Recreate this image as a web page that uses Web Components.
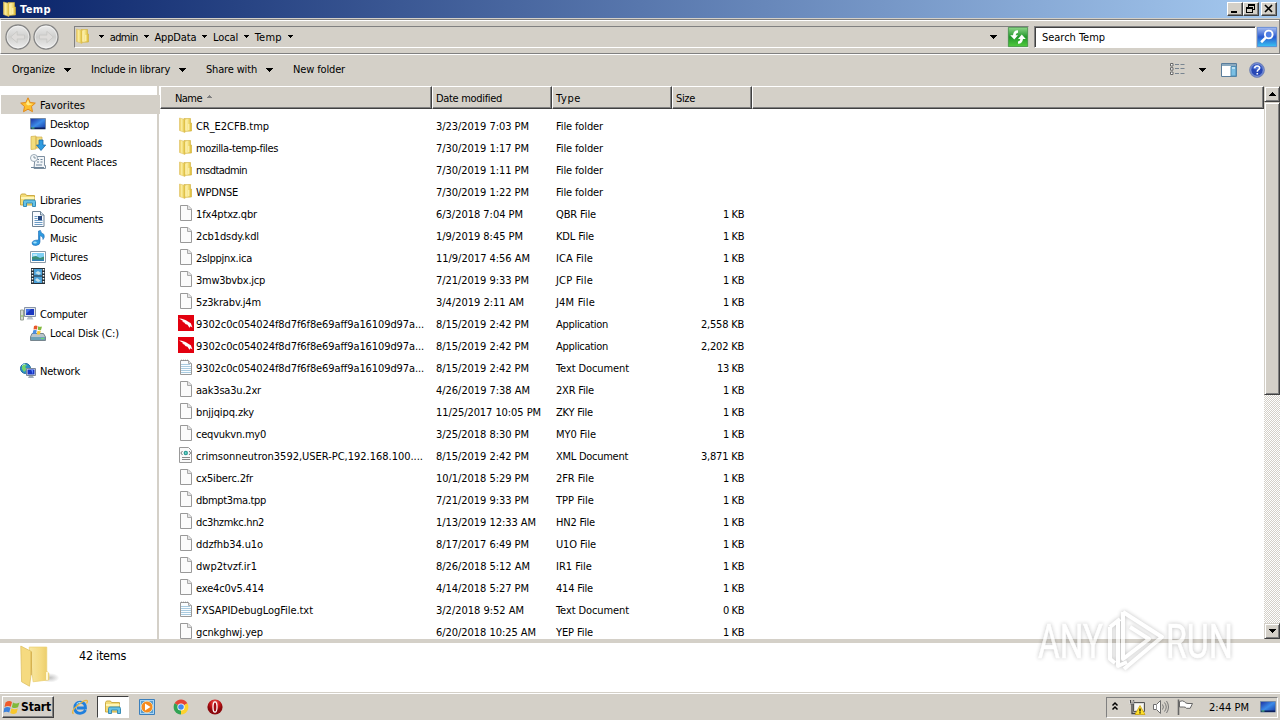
<!DOCTYPE html>
<html lang="en">
<head>
<meta charset="UTF-8">
<title>Temp</title>
<style>
    body {
        margin: 0;
        width: 1280px;
        height: 720px;
        overflow: hidden;
        background: #d4d0c8;
        color: #000;
        font: 11px/14px "DejaVu Sans Condensed", "DejaVu Sans", sans-serif;
    }
</style>
</head>
<body>
<explorer-window></explorer-window>

<script>
/* pixel advances of the interface font at 11px */
const ADVANCE = {
    a:6, b:6, c:5, d:6, e:6, f:4, g:6, h:6, i:2, j:3, k:5, l:2, m:8, n:6, o:6, p:6, q:6, r:4, s:5, t:4, u:6, v:6, w:8, x:5, y:6, z:5,
    A:7, B:6, C:7, D:7, E:6, F:6, G:7, H:7, I:4, J:5, K:6, L:6, M:9, N:7, O:8, P:6, Q:8, R:7, S:6, T:7, U:7, V:6, W:10, X:6, Y:6, Z:6,
    ' ':3, '/':4, ':':4, '.':4, ',':4, '-':4, '_':6, '(':4, ')':4
};

const ICONS = {
    folder: `
        <defs><linearGradient id="f" x1="0" x2="1"><stop offset="0" stop-color="#e9c452"/><stop offset=".4" stop-color="#fbeea0"/><stop offset="1" stop-color="#dcb92e"/></linearGradient></defs>
        <path d="M6 1.500h6.500v4.500h1V14L6 14.500z" fill="url(#f)" stroke="#d0b03c" stroke-width=".6"/>
        <path d="M1.500 1L7 2.500V15.500L1.500 13.500z" fill="url(#f)" stroke="#dfc363" stroke-width=".6"/>
        <path d="M7.900 3v10.500M10.800 7v6" stroke="#fff6bb" stroke-width="1"/>`,
    file: `
        <path d="M2.500 .5h7.500l3.500 3.500v11.500h-11z" fill="#fbfbfb" stroke="#999"/>
        <path d="M9.500 .5v4h4" fill="#e4e4e4" stroke="#aaa"/>`,
    text: `
        <path d="M2.500 1.500h8l3 3v11h-11z" fill="#fafdff" stroke="#999"/>
        <path d="M3 1.200h8" stroke="#888" stroke-dasharray="1 1"/>
        <path d="M3 5.500h9M3 7.500h10M3 9.500h10M3 11.500h10M3 13.500h10" stroke="#a9cbe0"/>
        <path d="M10.500 1.500v3h3" fill="#e4e4e4" stroke="#aaa"/>`,
    xml: `
        <path d="M1.500 .5h9l3 3v12h-12z" fill="#fafafa" stroke="#999"/>
        <path d="M4.500 4L2.800 6l1.700 2M11 4l1.700 2L11 8" fill="none" stroke="#777"/>
        <circle cx="7.800" cy="6" r="2.200" fill="#2e9d96"/><circle cx="7.800" cy="6" r=".8" fill="#9fe"/>
        <path d="M4 10.500h8M4 12.500h8" stroke="#8a8a8a"/>`,
    app: `
        <path d="M0 0h16v16H0z" fill="#e3000f"/>
        <path d="M1 3.500C5 3.500 7.500 5 9.500 6.300L12.800 8.200L14.500 12.500L12.500 11.200L11.500 12.800L9.500 9.800L6.500 8.700L7.500 8.200L4 6.500L5.500 6.300z" fill="#fff"/>`,
    star: `
        <path d="M8 .8l2.200 4.700 5.100.6-3.800 3.400 1 5.200L8 12.200l-4.500 2.500 1-5.200L.7 6.100l5.100-.6z" fill="#fdbf2d" stroke="#e18a1c"/>
        <path d="M8 2.800L9.500 6.600l3.600.3L8 8.500 6 7z" fill="#ffec8c"/>`,
    desktop: `
        <defs><linearGradient id="d" x2="1" y2="1"><stop stop-color="#1d2e9e"/><stop offset=".5" stop-color="#3c8be8"/><stop offset="1" stop-color="#1535a0"/></linearGradient></defs>
        <path d="M.5 2.500h15v10.500H.5z" fill="url(#d)" stroke="#778aa5"/>
        <path d="M1 11.500h14v1.500H1z" fill="#0d1f5b"/><path d="M1.500 12h3" stroke="#5bd07c"/>`,
    downloads: `
        <path d="M1 1.500l5-.5v13L1 14.500zM6 2h6v11H6z" fill="#f3dd7d" stroke="#d2b04d" stroke-width=".7"/>
        <path d="M9 5h4v5h2.700L11 15.500 6.500 10H9z" fill="#2f9be0" stroke="#1969a8" stroke-width=".8"/>`,
    recent: `
        <path d="M5 2.500h9.500v9H15.500v3H4z" fill="#f2f5f8" stroke="#7d8fa0"/>
        <path d="M7 5.500h2M10.500 5.500h2M7 8h2M10.500 8h2M6 11h6M1 13.500h13" stroke="#6d8499"/>
        <circle cx="4" cy="4" r="3.500" fill="#f7fafc" stroke="#9ba9b5"/><path d="M4 2v2h2" fill="none" stroke="#6b7d8d" stroke-width=".8"/>`,
    library: `
        <path d="M.5 13V3.500l1-1.500h4l1 1.500h8V13z" fill="#f4dc77" stroke="#ccab45"/>
        <path d="M1 6h13.500" stroke="#fff5b5" stroke-width="2"/>
        <path d="M3.500 14.500V9.500q0-1.500 1.500-1.500h9q1.500 0 1.500 1.500v5h-3v-3.500h-6v3.500z" fill="#65c2e6" stroke="#398cb4"/>`,
    documents: `
        <path d="M2.500 .5h8l3.500 3.500v11.500H2.500z" fill="#fafcff" stroke="#6f8294"/>
        <path d="M10.500 .5V4H14" fill="#d5e5f2" stroke="#6f8294"/>
        <path d="M4.500 5.500h3M4.500 7.500h3M4.500 9.500h8M4.500 11.500h8M4.500 13.500h8" stroke="#6d9bc4"/><path d="M8 5h4v4H8z" fill="#25467e"/>`,
    music: `
        <path d="M8.500 1L10.500 .5Q10.500 3 14 4.500q1 3-1 5 .5-3-3-4V12q0 3-4 3.500-4 .2-4-2.500 .5-3 6.500-3z" fill="#2d9be0" stroke="#1767b4" stroke-width=".6"/>
        <ellipse cx="5" cy="12.500" rx="1.800" ry="1" fill="#a2e1fb"/>`,
    pictures: `
        <path d="M.5 2.500h15v11H.5z" fill="#fff" stroke="#8a9aa8"/><path d="M2 4h12v8H2z" fill="#7fd0f4"/>
        <path d="M2 8l4-1 4 2 4-1.500V12H2z" fill="#3a8f77"/><path d="M2 10.500h12V12H2z" fill="#2f7fb8"/><path d="M3 6h4" stroke="#fff"/>`,
    videos: `
        <path d="M1 0h14v16H1z" fill="#253038"/><path d="M4 1h8v6.500H4zM4 8.500h8V15H4z" fill="#4aa0d8"/>
        <path d="M2.500 1v15M13.500 1v15" stroke="#fff" stroke-width="1.500" stroke-dasharray="1.500 1.500"/>
        <path d="M5 5l3-2 3 2-2 2zM5 12l2-2 4 3-3 1z" fill="#c4e1ea"/>`,
    computer: `
        <path d="M.5 4h3v10h-3z" fill="#d3d8d0" stroke="#959f92"/><path d="M1 10h2" stroke="#7ec24a"/>
        <path d="M4.500 1.500h11v9h-11z" fill="#dfe5ec" stroke="#8793a6"/><path d="M6 3h8v6H6z" fill="#1a37c0"/><path d="M6 3h5L6 8z" fill="#3f6ee8"/>
        <path d="M8 11h4l1.500 2.500h-7z" fill="#b6c0cb"/>`,
    disk: `
        <path d="M2 8.500h11.500l2 3.500v3.500H.5V12z" fill="#b9c4cb" stroke="#76858e"/><path d="M1 12h14v3H1z" fill="#6da1b6"/><path d="M11 13.500h3" stroke="#67e06d"/>
        <path d="M4 1q2-1 3.500 0L7 4.500Q5 4 3.500 4.500z" fill="#e8572a"/><path d="M8.200 1.300q2 1 3.800.2L11 5Q9.500 5.500 7.800 4.800z" fill="#84ba3e"/>
        <path d="M3.300 5.300Q5 4.600 6.800 5.300L6 9Q4.500 8.300 2.500 9z" fill="#4a8ee0"/><path d="M7.500 5.700q1.700.8 3.300.1L10 9.200Q8.500 10 6.800 9.200z" fill="#f6c431"/>`,
    network: `
        <circle cx="5.500" cy="5.500" r="5" fill="#2c8fc7" stroke="#1f6a9b"/><path d="M2 3q3-3 5-1l-2 2 2 2-3 3-2-3z" fill="#74d36b"/><path d="M2 2.500q1.500-1.500 3-1.500" stroke="#c7f1ff" fill="none"/>
        <path d="M6.500 5.500h9v7h-9z" fill="#dfe5ec" stroke="#7b8799"/><path d="M7.500 6.500h7v5h-7z" fill="#1836c4"/><path d="M11 6.500h2v5" fill="#5b86ff"/><path d="M9 13h4l1 2H8z" fill="#9fabb8"/>`,
    back: `
        <defs><linearGradient id="b" x2="0" y2="1"><stop stop-color="#ececec"/><stop offset=".5" stop-color="#cfcfcd"/><stop offset="1" stop-color="#efefef"/></linearGradient></defs>
        <circle cx="8" cy="8" r="7.400" fill="url(#b)" stroke="#858585" stroke-width=".8"/><circle cx="8" cy="8" r="6.700" fill="none" stroke="#fff" stroke-opacity=".6" stroke-width=".5"/>
        <path d="M3.500 8L7.500 4.500v2.300h4.500v2.400H7.500v2.300z" fill="#dedcda" stroke="#c6c6c4" stroke-width=".5"/>`,
    refresh: `
        <defs><linearGradient id="r" x2="0" y2="1"><stop stop-color="#8fd68a"/><stop offset=".5" stop-color="#22972b"/><stop offset="1" stop-color="#50cb3d"/></linearGradient></defs>
        <path d="M.3 .3h15.400v15.400H.3z" fill="url(#r)" stroke="#3c8a42" stroke-width=".6"/>
        <path d="M8 2.700Q4.500 2.500 4 6.500H1.800L5 10l3-3.500H6.100Q6.300 4.800 8 4.500zM8 13.300Q11.500 13.500 12 9.500h2.200L11 6 8 9.500h1.900Q9.700 11.200 8 11.500z" fill="#fff"/>`,
    search: `
        <defs><linearGradient id="s" x2="0" y2="1"><stop stop-color="#a7bdf0"/><stop offset=".5" stop-color="#2859cf"/><stop offset="1" stop-color="#39c3f3"/></linearGradient></defs>
        <path d="M.3 .3h15.400v15.400H.3z" fill="url(#s)" stroke="#4c7bd0" stroke-width=".6"/>
        <circle cx="9.400" cy="6" r="3.100" fill="#507fe5" stroke="#fff" stroke-width="1.500"/><path d="M7 8.500L3.300 12.200" stroke="#fff" stroke-width="2"/>`,
    views: `
        <path d="M.5 1.500h2.500v2.500H.5zM.5 5.700h2.500v2.500H.5zM.5 10h2.500v2.500H.5z" fill="#fff" stroke="#666"/>
        <path d="M5 2.500h4M5 6.500h4M5 11.500h4M10.500 2.500h4M10.500 6.500h4M10.500 11.500h4" stroke="#788591"/>`,
    preview: `
        <path d="M.5 1.500h15v13H.5z" fill="#fff" stroke="#597c9b"/><path d="M1 2h14v2H1z" fill="#8aa9bf"/><path d="M10 4.500h5v9.500h-5z" fill="#7bbfe3" stroke="#4f8db4"/><path d="M11 6h3" stroke="#fff"/>`,
    help: `
        <circle cx="8" cy="8" r="7.400" fill="#2747b5" stroke="#7d8db8"/><circle cx="8" cy="8" r="6.300" fill="none" stroke="#a9bbea" stroke-width=".8"/><path d="M3 6q5-6 10 0-5 3-10 0" fill="#6e94e8" opacity=".6"/>
        <path d="M5.700 6.200Q5.800 4 8.200 4t2.300 2q0 1.200-1.300 1.900Q8.300 8.400 8.300 9.700M8.300 11v1.600" fill="none" stroke="#fff" stroke-width="1.600"/>`,
    flag: `
        <path d="M1.500 3.500Q5 1 8 3L6.800 7.700Q4 6 .5 8z" fill="#ef5a2a"/><path d="M9 3.500q3 1.800 6.500 0L14 8.300q-3 1.600-6.200-.1z" fill="#80b93c"/>
        <path d="M.3 9q3-2 6.200-.2L5.200 13.500Q2.500 12 -.5 13.500z" fill="#3c82dc"/><path d="M7.500 9.300q3 1.800 6.300.1L12.500 14q-3 1.800-6.300 0z" fill="#f8c72d"/>`,
    ie: `
        <path d="M13.500 11Q12 14.300 8 14.300 2.800 14 2.800 8.700 3 3.500 8.200 3.200 13.500 3.500 13.500 9H5" fill="none" stroke="#1f7fdd" stroke-width="2.800"/>
        <path d="M1.500 14.800Q-1.500 12.500 5.500 6.500 12.500 .5 15 1.500q1 .6-.5 3" fill="none" stroke="#e9b53d" stroke-width="1.300"/><path d="M4.500 5q2-2 4-1.500" fill="none" stroke="#aee7ff"/>`,
    wmp: `
        <path d="M.5 .5h15v15H.5z" fill="#a6d4f5" stroke="#3b7fbc"/><path d="M2 2h12v12H2z" fill="#5b9ed0"/>
        <circle cx="8" cy="8" r="5.800" fill="#f58b1e" stroke="#fff0cb" stroke-width=".7"/><path d="M6 4.500L11.500 8 6 11.500z" fill="#fff"/>`,
    chrome: `
        <path d="M8 8L1.600 4.300A7.400 7.400 0 0 1 14.400 4.300z" fill="#e44436"/><path d="M8 8l6.400-3.700A7.400 7.400 0 0 1 8 15.400z" fill="#fdd22e"/><path d="M8 8v7.400A7.400 7.400 0 0 1 1.600 4.300z" fill="#32a354"/>
        <circle cx="8" cy="8" r="3.600" fill="#fff"/><circle cx="8" cy="8" r="2.800" fill="#4389ef"/>`,
    opera: `
        <defs><radialGradient id="o" cy=".25"><stop stop-color="#f3776c"/><stop offset=".6" stop-color="#c9171a"/><stop offset="1" stop-color="#8c080c"/></radialGradient></defs>
        <circle cx="8" cy="8" r="7.600" fill="url(#o)"/><ellipse cx="8" cy="8" rx="2" ry="5.200" fill="#a40b12" stroke="#fff" stroke-width="1.300"/>`,
    chevrons: `<path d="M5.500 6.500L8 4l2.500 2.500M5.500 10.500L8 8l2.500 2.500" fill="none" stroke="#000" stroke-width="1.500"/>`,
    wired: `
        <path d="M4.500 3.500h11v9h-11z" fill="#dcdcd8" stroke="#555"/><path d="M6 5h8v6H6z" fill="#f7f7f3"/><path d="M1.500 1v3.500h3V1M3 5v9.500h7" fill="none" stroke="#444" stroke-width="1.300"/><path d="M.5 1.500v3h4v-3" fill="none" stroke="#fff" stroke-width=".5"/>
        <path d="M11 6.500l5 9H6z" fill="#ffe12b" stroke="#c69a00" stroke-width=".7"/><path d="M11 9.500v3M11 13.300v1.200" stroke="#000" stroke-width="1.200"/>`,
    speaker: `
        <path d="M.5 5.500h3l4-4v13l-4-4h-3z" fill="#fff" stroke="#6c6c6c"/><path d="M3.500 5.500v5" stroke="#999"/>
        <path d="M9.500 5.500q1.800 2.500 0 5M11.500 3.500q3.500 4.500 0 9M13.500 2q4 6 0 12" fill="none" stroke="#777"/>`,
    pennant: `
        <path d="M1.500 .5v15.500" stroke="#666" stroke-width="1.600"/><path d="M2.500 2.500q3-1.500 5 .2 1 1.700 3.500 1.800h4.500l-2.300 4.800H9.500q-1-1.500-3-1.300h-4z" fill="#fff" stroke="#666"/>`,
    bigfolder: `
        <defs>
            <linearGradient id="g" x1="0" x2="1"><stop stop-color="#f8e7a4"/><stop offset=".6" stop-color="#f4da80"/><stop offset="1" stop-color="#e9ca65"/></linearGradient>
            <radialGradient id="h"><stop stop-color="#999" stop-opacity=".6"/><stop offset="1" stop-color="#999" stop-opacity="0"/></radialGradient>
        </defs>
        <ellipse cx="11.500" cy="12.500" rx="3.500" ry="1.800" fill="url(#h)"/>
        <path d="M3.500 .8H10.200V10l.8 .8v2.500L5 14z" fill="url(#g)" stroke="#ecd174" stroke-width=".3"/>
        <path d="M.3 .4L4.200 2.400V11.500L3.600 15.700L.6 14z" fill="#f5da80" stroke="#dec063" stroke-width=".3"/>
        <path d="M4.300 2.500v9" stroke="#c99e35" stroke-width=".3"/><path d="M10.300 10.300v3" stroke="#fff8d7" stroke-width=".8"/>`
};

class WinIcon extends HTMLElement {
    constructor(){
        super();
        this.attachShadow({mode:'open'});
    }

    connectedCallback(){
        const size = this.getAttribute('size') || 16;
        this.shadowRoot.innerHTML = /* html */ `
            <style>
                :host { display: block; flex: none; width: ${size}px; height: ${size}px; }
                svg { display: block; width: 100%; height: 100%; overflow: visible; }
            </style>
            <svg viewBox="0 0 16 16" aria-hidden="true">${ICONS[this.getAttribute('name')]}</svg>
        `
    }
}
customElements.define('win-icon', WinIcon);


/* small solid triangle: dir = up | down, w = odd width */
class WinArrow extends HTMLElement {
    constructor(){
        super();
        this.attachShadow({mode:'open'});
    }

    connectedCallback(){
        const w = Number(this.getAttribute('w') || 7);
        const h = (w + 1) / 2;
        const up = this.getAttribute('dir') === 'up';
        let rows = '';
        for(let i = 0; i < h; i++){
            rows += `<rect x="${i}" y="${up ? h - 1 - i : i}" width="${w - i * 2}" height="1"/>`;
        }
        this.shadowRoot.innerHTML = /* html */ `
            <style>
                :host { display: block; flex: none; width: ${w}px; height: ${h}px; }
                svg { display: block; fill: currentColor; }
            </style>
            <svg width="${w}" height="${h}" shape-rendering="crispEdges">${rows}</svg>
        `
    }
}
customElements.define('win-arrow', WinArrow);


/* one line of text, spaced out to the advances above (or to w) */
class WinLabel extends HTMLElement {
    constructor(){
        super();
        this.attachShadow({mode:'open'});
        this.shadowRoot.innerHTML = /* html */ `
            <style>
                :host { display: flex; flex: none; padding-top: var(--drop, 2px); }
                span { flex: none; white-space: pre; }
            </style>
            <span><slot></slot></span>
        `
    }

    connectedCallback(){
        const text = this.textContent;
        const width = Number(this.getAttribute('w')) || [...text].reduce((sum, ch) => sum + (ADVANCE[ch] || 6), 0);
        const natural = this.shadowRoot.querySelector('span').getBoundingClientRect().width;
        this.style.width = width + 'px';
        this.style.letterSpacing = (width - natural) / text.length + 'px';
    }
}
customElements.define('win-label', WinLabel);


class TitleBar extends HTMLElement {
    constructor(){
        super();
        this.attachShadow({mode:'open'});
        this.shadowRoot.innerHTML = /* html */ `
            <style>
                :host { display: flex; align-items: center; box-sizing: border-box; height: 18px; padding: 0 3px 0 2px; background: linear-gradient(90deg, #0a246a, #a6caf0); color: #fff; }
                win-label { margin-left: 2px; font: bold 11px/14px "DejaVu Sans Condensed", sans-serif; }
                .buttons { display: flex; margin-left: auto; }
                button { width: 16px; height: 14px; padding: 0; border: 1px solid; border-color: #fff #404040 #404040 #fff; box-shadow: inset -1px -1px #808080; background: #d4d0c8; }
                button:last-child { margin-left: 2px; }
                svg { display: block; }
            </style>
            <win-icon name="folder"></win-icon>
            <win-label w="31">Temp</win-label>
            <div class="buttons">
                <button aria-label="Minimize"><svg width="14" height="12"><path d="M3 8h6v2H3z"/></svg></button>
                <button aria-label="Restore"><svg width="14" height="12" fill="none" stroke="#000" shape-rendering="crispEdges"><path d="M5 1.500h6M4.500 4V1M5 2.500h6M10.500 2v5M9 6.500h2M2 5h6M2.500 4v6M2 9.500h6M8.500 4v6M2 4.500h6"/></svg></button>
                <button aria-label="Close"><svg width="14" height="12"><path d="M3 2l7 7M10 2l-7 7" stroke="#000" stroke-width="1.600"/></svg></button>
            </div>
        `
    }
}
customElements.define('title-bar', TitleBar);


class AddressBar extends HTMLElement {
    constructor(){
        super();
        this.attachShadow({mode:'open'});
        const path = ['admin', 'AppData', 'Local', 'Temp'];
        this.shadowRoot.innerHTML = /* html */ `
            <style>
                :host { display: flex; align-items: center; box-sizing: border-box; height: 35px; margin: 1px 0; padding: 0 2px 0 4px; border: 1px solid; border-color: #808080 #808080 #808080 #fff; box-shadow: inset 0 1px #fff, 0 1px #fff; }
                .round { display: flex; gap: 2px; padding-right: 14px; }
                .round win-icon:last-child { transform: scaleX(-1); }
                .path { flex: 1; display: flex; align-items: center; box-sizing: border-box; height: 22px; margin-left: 1px; border: 1px solid; border-color: #808080 #d4d0c8 #fff #808080; }
                .path win-label { margin: 0 6px 0 5.700px; }
                .path win-icon:first-child { margin: 0 8px 2px 0; }
                .drop { margin-left: auto; margin-right: 11px; }
                .search { --drop: 1px; box-sizing: border-box; width: 222px; height: 22px; margin-left: 5px; padding: 3px 7px; border: 1px solid; border-color: #808080 #fff #fff #808080; box-shadow: inset 1px 1px #404040; background: #fff; }
                .search + win-icon { margin-left: 1px; }
            </style>
            <div class="round"><win-icon name="back" size="26"></win-icon><win-icon name="back" size="26"></win-icon></div>
            <div class="path">
                <win-icon name="folder"></win-icon>
                <win-arrow w="5"></win-arrow>
                ${path.map((name) => `<win-label>${name}</win-label><win-arrow w="5"></win-arrow>`).join('')}
                <win-arrow class="drop"></win-arrow>
                <win-icon name="refresh" size="20"></win-icon>
            </div>
            <div class="search"><win-label>Search Temp</win-label></div>
            <win-icon name="search" size="20"></win-icon>
        `
    }
}
customElements.define('address-bar', AddressBar);


class CommandBar extends HTMLElement {
    constructor(){
        super();
        this.attachShadow({mode:'open'});
        this.shadowRoot.innerHTML = /* html */ `
            <style>
                :host { --drop: 0; display: flex; align-items: center; box-sizing: border-box; height: 31px; padding: 0 15px 1px 12px; }
                win-arrow { margin: 0 20px 0 9px; }
                .tools { display: flex; align-items: center; margin-left: auto; }
                .tools win-arrow { margin: 0 15px 0 13px; }
                .tools win-icon:last-child { margin-left: 12px; }
            </style>
            ${['Organize', 'Include in library', 'Share with'].map((name) => `<win-label>${name}</win-label><win-arrow></win-arrow>`).join('')}
            <win-label>New folder</win-label>
            <div class="tools">
                <win-icon name="views"></win-icon>
                <win-arrow></win-arrow>
                <win-icon name="preview"></win-icon>
                <win-icon name="help"></win-icon>
            </div>
        `
    }
}
customElements.define('command-bar', CommandBar);


class NavPane extends HTMLElement {
    constructor(){
        super();
        this.attachShadow({mode:'open'});
        const groups = [
            [['star', 'Favorites'], ['desktop', 'Desktop'], ['downloads', 'Downloads'], ['recent', 'Recent Places']],
            [['library', 'Libraries'], ['documents', 'Documents'], ['music', 'Music'], ['pictures', 'Pictures'], ['videos', 'Videos']],
            [['computer', 'Computer'], ['disk', 'Local Disk (C:)']],
            [['network', 'Network']]
        ];
        this.shadowRoot.innerHTML = /* html */ `
            <style>
                :host { display: block; flex: none; box-sizing: border-box; width: 160px; padding: 9px 0 0 1px; background: linear-gradient(90deg, #fff 157px, #d4d0c8 157px 159px, #fff 159px); }
                .group { margin-bottom: 19px; }
                .item { display: flex; align-items: center; gap: 4px; height: 19px; padding-left: 29px; }
                .item:first-child { padding-left: 19px; }
                .group:first-of-type .item:first-child { background: #d4d0c8; }
            </style>
            ${groups.map((items) => `<div class="group">${items.map(([icon, name]) => `
                <div class="item"><win-icon name="${icon}"></win-icon><win-label>${name}</win-label></div>`).join('')}
            </div>`).join('')}
        `
    }
}
customElements.define('nav-pane', NavPane);


class FileRow extends HTMLElement {
    constructor(){
        super();
        this.attachShadow({mode:'open'});
    }

    connectedCallback(){
        const [icon, name, date, type, size] = this.getAttribute('data').split('|');
        this.shadowRoot.innerHTML = /* html */ `
            <style>
                :host { display: grid; grid-template-columns: 258px 120px 120px 68px; align-items: center; height: 22px; padding-left: 18px; }
                .name { display: flex; align-items: center; gap: 2px; }
                .name win-icon { margin-bottom: 2px; }
                .size { justify-self: end; }
            </style>
            <div class="name"><win-icon name="${icon}"></win-icon><win-label>${name}</win-label></div>
            <win-label>${date}</win-label>
            <win-label>${type}</win-label>
            ${size ? `<win-label class="size">${size} KB</win-label>` : ''}
        `
    }
}
customElements.define('file-row', FileRow);


class FileList extends HTMLElement {
    constructor(){
        super();
        this.attachShadow({mode:'open'});
        const rows = [
            'folder|CR_E2CFB.tmp|3/23/2019 7:03 PM|File folder',
            'folder|mozilla-temp-files|7/30/2019 1:17 PM|File folder',
            'folder|msdtadmin|7/30/2019 1:11 PM|File folder',
            'folder|WPDNSE|7/30/2019 1:22 PM|File folder',
            'file|1fx4ptxz.qbr|6/3/2018 7:04 PM|QBR File|1',
            'file|2cb1dsdy.kdl|1/9/2019 8:45 PM|KDL File|1',
            'file|2slppjnx.ica|11/9/2017 4:56 AM|ICA File|1',
            'file|3mw3bvbx.jcp|7/21/2019 9:33 PM|JCP File|1',
            'file|5z3krabv.j4m|3/4/2019 2:11 AM|J4M File|1',
            'app|9302c0c054024f8d7f6f8e69aff9a16109d97a...|8/15/2019 2:42 PM|Application|2,558',
            'app|9302c0c054024f8d7f6f8e69aff9a16109d97a...|8/15/2019 2:42 PM|Application|2,202',
            'text|9302c0c054024f8d7f6f8e69aff9a16109d97a...|8/15/2019 2:42 PM|Text Document|13',
            'file|aak3sa3u.2xr|4/26/2019 7:38 AM|2XR File|1',
            'file|bnjjqipq.zky|11/25/2017 10:05 PM|ZKY File|1',
            'file|ceqvukvn.my0|3/25/2018 8:30 PM|MY0 File|1',
            'xml|crimsonneutron3592,USER-PC,192.168.100....|8/15/2019 2:42 PM|XML Document|3,871',
            'file|cx5iberc.2fr|10/1/2018 5:29 PM|2FR File|1',
            'file|dbmpt3ma.tpp|7/21/2019 9:33 PM|TPP File|1',
            'file|dc3hzmkc.hn2|1/13/2019 12:33 AM|HN2 File|1',
            'file|ddzfhb34.u1o|8/17/2017 6:49 PM|U1O File|1',
            'file|dwp2tvzf.ir1|8/26/2018 5:12 AM|IR1 File|1',
            'file|exe4c0v5.414|4/14/2018 5:27 PM|414 File|1',
            'text|FXSAPIDebugLogFile.txt|3/2/2018 9:52 AM|Text Document|0',
            'file|gcnkghwj.yep|6/20/2018 10:25 AM|YEP File|1'
        ];
        this.shadowRoot.innerHTML = /* html */ `
            <style>
                :host { display: block; flex: 1; overflow: hidden; background: #fff; }
                .head { display: grid; grid-template-columns: 272px 120px 120px 80px 1fr; height: 23px; margin-bottom: 6px; }
                .head div { display: flex; align-items: center; gap: 5px; padding: 0 0 0 3px; border: 1px solid; border-color: #fff #404040 #404040 #fff; box-shadow: inset -1px -1px #808080; background: #d4d0c8; }
                .head div:first-child { padding-left: 14px; }
                win-arrow { color: #808080; margin-bottom: 3px; }
            </style>
            <div class="head">
                <div><win-label>Name</win-label><win-arrow w="5" dir="up"></win-arrow></div>
                <div><win-label>Date modified</win-label></div>
                <div><win-label>Type</win-label></div>
                <div><win-label>Size</win-label></div>
                <div></div>
            </div>
            ${rows.map((row) => `<file-row data="${row}"></file-row>`).join('')}
        `
    }
}
customElements.define('file-list', FileList);


class ScrollBar extends HTMLElement {
    constructor(){
        super();
        this.attachShadow({mode:'open'});
        this.shadowRoot.innerHTML = /* html */ `
            <style>
                :host { display: flex; flex-direction: column; flex: none; width: 16px; background: repeating-conic-gradient(#d4d0c8 0 25%, #fff 0 50%) 0 0 / 2px 2px; }
                div { display: flex; align-items: center; justify-content: center; box-sizing: border-box; height: 16px; border: 1px solid; border-color: #d4d0c8 #404040 #404040 #d4d0c8; box-shadow: inset 1px 1px #fff, inset -1px -1px #808080; background: #d4d0c8; }
                .thumb { height: 293px; }
                div:last-child { margin-top: auto; }
            </style>
            <div><win-arrow dir="up"></win-arrow></div>
            <div class="thumb"></div>
            <div><win-arrow></win-arrow></div>
        `
    }
}
customElements.define('scroll-bar', ScrollBar);


class DetailsPane extends HTMLElement {
    constructor(){
        super();
        this.attachShadow({mode:'open'});
        this.shadowRoot.innerHTML = /* html */ `
            <style>
                :host { --drop: 0; display: flex; gap: 17px; box-sizing: border-box; height: 53px; padding: 2px 0 0 20px; border-top: 4px solid #d4d0c8; background: #fff; }
                win-label { margin-top: 3px; font-size: 12.500px; line-height: 16px; }
            </style>
            <win-icon name="bigfolder" size="42"></win-icon>
            <win-label w="47">42 items</win-label>
        `
    }
}
customElements.define('details-pane', DetailsPane);


class TaskBar extends HTMLElement {
    constructor(){
        super();
        this.attachShadow({mode:'open'});
        this.shadowRoot.innerHTML = /* html */ `
            <style>
                :host { display: flex; align-items: center; box-sizing: border-box; height: 28px; padding: 1px 2px 0; border-top: 1px solid #d4d0c8; box-shadow: inset 0 1px #fff; background: #d4d0c8; }
                .start { --drop: 0; display: flex; align-items: center; gap: 1px; box-sizing: border-box; width: 52px; height: 22px; padding-left: 1px; border: 1px solid; border-color: #fff #404040 #404040 #fff; box-shadow: inset -1px -1px #808080; }
                .start win-label { font: bold 12px/16px "DejaVu Sans Condensed", sans-serif; }
                .pins { display: flex; align-items: center; margin-left: 18px; gap: 18px; }
                .open { display: flex; align-items: center; justify-content: center; box-sizing: border-box; width: 32px; height: 22px; margin: 0 -8px 0 -9px; border: 1px solid; border-color: #404040 #fff #fff #404040; background: #fff; }
                .tray { display: flex; align-items: center; box-sizing: border-box; width: 172px; height: 21px; margin-left: auto; border: 1px solid; border-color: #808080 #fff #fff #808080; }
                .tray win-icon + win-icon { margin-left: 8px; }
                .tray win-label { margin: 0 11px 0 16px; }
            </style>
            <div class="start"><win-icon name="flag"></win-icon><win-label w="30">Start</win-label></div>
            <div class="pins">
                <win-icon name="ie"></win-icon>
                <div class="open"><win-icon name="library"></win-icon></div>
                <win-icon name="wmp"></win-icon>
                <win-icon name="chrome"></win-icon>
                <win-icon name="opera"></win-icon>
            </div>
            <div class="tray">
                <win-icon name="chevrons"></win-icon>
                <win-icon name="wired" style="margin-left:6px"></win-icon>
                <win-icon name="speaker"></win-icon>
                <win-icon name="pennant"></win-icon>
                <win-label>2:44 PM</win-label>
                <win-icon name="desktop"></win-icon>
            </div>
        `
    }
}
customElements.define('task-bar', TaskBar);


class RunMark extends HTMLElement {
    constructor(){
        super();
        this.attachShadow({mode:'open'});
        this.shadowRoot.innerHTML = /* html */ `
            <style>
                :host { display: block; position: absolute; left: 1030px; top: 604px; }
                svg { display: block; overflow: visible; filter: drop-shadow(0 0 2px rgba(0,0,0,.35)); opacity: .7; }
                text { font: 400 48px Roboto, sans-serif; fill: #fff; stroke: #fff; stroke-width: .6; }
            </style>
            <svg width="210" height="74" viewBox="0 0 210 74">
                <text x="8" y="54" textLength="65" lengthAdjust="spacingAndGlyphs">ANY</text>
                <text x="136" y="54" textLength="67" lengthAdjust="spacingAndGlyphs">RUN</text>
                <g fill="none" stroke="#fff" stroke-width="4" stroke-linejoin="round">
                    <path d="M80 23V55l5 4"/>
                    <path d="M80 23l10-8"/>
                    <path d="M88 16V62l9-4"/>
                    <path d="M93 8L132 33 94 65"/>
                    <path d="M93 8V55L119 35 100 23"/>
                </g>
            </svg>
        `
    }
}
customElements.define('run-mark', RunMark);


class ExplorerWindow extends HTMLElement {
    constructor(){
        super();
        this.attachShadow({mode:'open'});
        this.shadowRoot.innerHTML = /* html */ `
            <style>
                :host { display: flex; flex-direction: column; height: 720px; }
                .main { flex: 1; min-height: 0; display: flex; }
            </style>
            <title-bar></title-bar>
            <address-bar></address-bar>
            <command-bar></command-bar>
            <div class="main">
                <nav-pane></nav-pane>
                <file-list></file-list>
                <scroll-bar></scroll-bar>
            </div>
            <details-pane></details-pane>
            <task-bar></task-bar>
            <run-mark></run-mark>
        `
    }
}
customElements.define('explorer-window', ExplorerWindow);
</script>
</body>
</html>
